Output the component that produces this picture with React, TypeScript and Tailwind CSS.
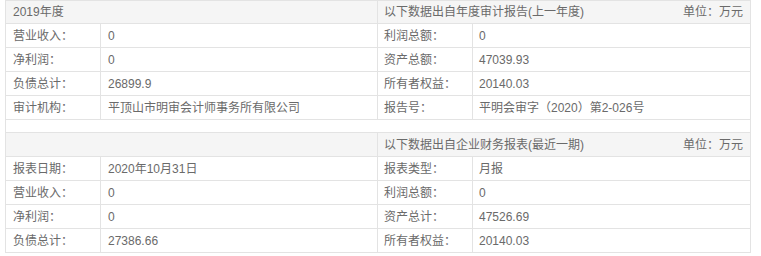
import React from "react";

const B = "border-[#e3e3e3]";

function Row({ cells }: { cells: [string, string, string, string] }) {
  return (
    <div className={`flex h-[24px] border-b ${B}`}>
      <div className={`w-[95px] border-r ${B} pl-[7px] flex items-center`}>{cells[0]}</div>
      <div className={`w-[277px] border-r ${B} pl-[7px] flex items-center`}>{cells[1]}</div>
      <div className={`w-[95px] border-r ${B} pl-[6px] flex items-center`}>{cells[2]}</div>
      <div className="flex-1 pl-[6px] flex items-center">{cells[3]}</div>
    </div>
  );
}

function Header({ left, right, h }: { left: string; right: string; h: string }) {
  return (
    <div className={`flex ${h} border-b ${B} bg-[#f5f5f5]`}>
      <div className={`w-[372px] border-r ${B} pl-[7px] flex items-center`}>{left}</div>
      <div className="flex-1 pl-[6px] pr-[7px] flex items-center justify-between">
        <span>{right}</span>
        <span>单位：万元</span>
      </div>
    </div>
  );
}

export default function App() {
  return (
    <div className="bg-white w-[761px] h-[256px]">
      <div
        className={`ml-[5px] w-[746px] border-t border-l border-r ${B} text-[12px] text-[#6a6a6a]`}
        style={{ fontFamily: '"Liberation Sans", "Noto Sans CJK SC", sans-serif' }}
      >
        <Header left="2019年度" right="以下数据出自年度审计报告(上一年度)" h="h-[23px]" />
        <Row cells={["营业收入：", "0", "利润总额：", "0"]} />
        <Row cells={["净利润：", "0", "资产总额：", "47039.93"]} />
        <Row cells={["负债总计：", "26899.9", "所有者权益：", "20140.03"]} />
        <Row cells={["审计机构：", "平顶山市明审会计师事务所有限公司", "报告号：", "平明会审字（2020）第2-026号"]} />
        <div className={`h-[13px] border-b ${B}`} />
        <Header left="" right="以下数据出自企业财务报表(最近一期)" h="h-[24px]" />
        <Row cells={["报表日期：", "2020年10月31日", "报表类型：", "月报"]} />
        <Row cells={["营业收入：", "0", "利润总额：", "0"]} />
        <Row cells={["净利润：", "0", "资产总计：", "47526.69"]} />
        <Row cells={["负债总计：", "27386.66", "所有者权益：", "20140.03"]} />
      </div>
    </div>
  );
}
